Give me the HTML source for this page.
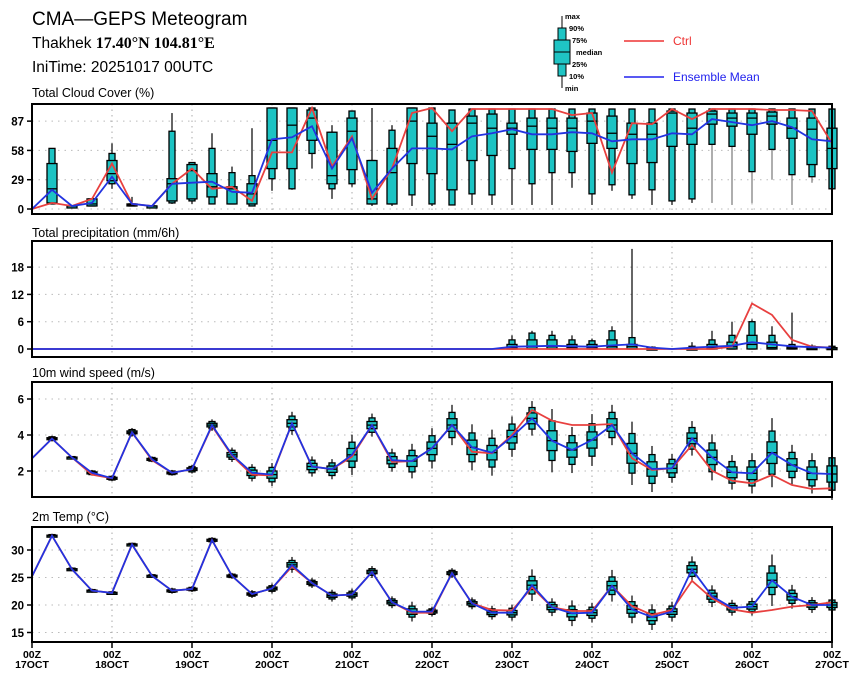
<!DOCTYPE html>
<html><head><meta charset="utf-8"><style>
html,body{margin:0;padding:0;background:#fff;width:860px;height:680px;overflow:hidden}
svg{display:block}
text{font-family:"Liberation Sans",sans-serif}
</style></head><body>
<svg id="s" width="860" height="680" xmlns="http://www.w3.org/2000/svg">
<text x="32" y="25" font-size="19">CMA—GEPS Meteogram</text>
<text x="32" y="48" font-size="15.5">Thakhek <tspan font-family="Liberation Serif" font-weight="bold" font-size="16">17.40°N 104.81°E</tspan></text>
<text x="32" y="72" font-size="15.5">IniTime: 20251017 00UTC</text>
<g id="leg">
<line x1="562" y1="16" x2="562" y2="88" stroke="#000" stroke-width="1"/>
<rect x="558" y="28" width="8" height="12" fill="#1fc4c4" stroke="#000" stroke-width="1"/>
<rect x="554" y="40" width="16" height="24" fill="#1fc4c4" stroke="#000" stroke-width="1"/>
<line x1="554" y1="52" x2="570" y2="52" stroke="#000"/>
<rect x="558" y="64" width="8" height="12" fill="#1fc4c4" stroke="#000" stroke-width="1"/>
<g font-size="7.5" font-weight="bold">
<text x="565" y="19">max</text><text x="569" y="31">90%</text><text x="572" y="43">75%</text>
<text x="576" y="55">median</text><text x="572" y="67">25%</text><text x="569" y="79">10%</text><text x="565" y="91">min</text>
</g>
<line x1="624" y1="41" x2="664" y2="41" stroke="#e33" stroke-width="1.5"/>
<text x="673" y="45" font-size="12" fill="#e33">Ctrl</text>
<line x1="624" y1="77" x2="664" y2="77" stroke="#22e" stroke-width="1.5"/>
<text x="673" y="81" font-size="12" fill="#22e">Ensemble Mean</text>
</g>
</svg>
<script>
var S=document.getElementById('s'),h='';
function X(i){return 32+20*i}
var panels=[
 {t:'Total Cloud Cover (%)',top:104,bot:214,y0:209,k:1.01,v0:0,ticks:[0,29,58,87],lt:97},
 {t:'Total precipitation (mm/6h)',top:241,bot:357,y0:349,k:4.55,v0:0,ticks:[0,6,12,18],lt:237},
 {t:'10m wind speed (m/s)',top:382,bot:497,y0:507,k:18,v0:0,ticks:[2,4,6],lt:377},
 {t:'2m Temp (°C)',top:527,bot:642,y0:605,k:5.5,v0:20,ticks:[15,20,25,30],lt:521}
];
var cloud=[[0,0,0,0,0,0,0,0,0],[5,5,6,20,45,60,60,6,19],[3,3,3,3,3,3,3,3,3],[3,3,3,5,10,10,10,10,6],[20,25,28,35,48,55,65,45,32],[3,3,3,4,5,5,12,5,5],[3,3,3,3,3,3,3,3,3],[5,6,8,25,30,77,95,25,25],[5,8,10,38,44,46,46,40,26],[5,5,12,22,35,60,75,20,27],[5,5,5,20,22,36,42,22,17],[3,3,5,15,25,33,80,8,16],[18,30,40,68,100,100,100,56,69],[19,20,40,83,100,100,100,56,71],[40,55,68,90,98,100,100,100,82],[10,20,25,33,76,76,83,42,40],[22,25,39,77,90,97,97,72,70],[3,5,5,10,48,48,100,10,16],[3,5,5,36,60,78,83,40,40],[3,14,45,87,100,100,100,95,60],
[3,5,35,72,85,100,100,100,60],[4,4,19,64,85,98,98,77,59],[4,15,48,85,92,99,99,99,72],[4,14,53,80,94,99,99,99,75],[4,40,74,80,85,99,99,99,79],[4,25,59,82,90,99,99,99,74],[4,36,59,80,90,99,99,99,74],[21,36,57,80,90,99,99,93,76],[4,15,65,87,95,99,99,95,75],[18,24,60,75,92,99,99,36,67],[10,14,45,74,85,99,99,85,69],[4,19,46,74,85,99,99,84,69],[4,8,62,95,97,99,99,99,75],[6,10,64,80,95,99,99,89,74],[6,64,84,94,97,99,99,99,89],[4,62,82,90,95,99,99,99,86],[6,37,74,90,95,99,99,99,83],[29,59,84,92,96,99,99,98,87],[4,34,70,80,90,99,99,98,81],[26,32,44,79,90,99,99,97,69],[15,20,40,60,80,99,99,65,67]];
var prec=[];for(var i=0;i<41;i++)prec.push([0,0,0,0,0,0,0,0,0]);
var pd={24:[0,0,0,0.3,1,2,3,0,0.5],25:[0,0,0,0.5,2,3.5,4,0,0.6],26:[0,0,0,0.5,2,3,4,0,0.7],27:[0,0,0,0.3,1,2,3,0,0.6],28:[0,0,0,0.3,1,1.8,2.3,0,0.5],29:[0,0,0,0.5,2,4,5,0,0.8],30:[0,0,0,0.5,1,2.5,22,0,1],31:[0,0,0,0,0.2,0.4,0.6,0,0.3],33:[0,0,0,0,0.2,0.6,1.5,0,0.3],34:[0,0,0,0.3,1,2,4,0,0.5],35:[0,0,0,0.5,1.5,3,6,0.5,0.7],36:[0,0,0,1,3,6,6.5,10,1.5],37:[0,0,0,0.3,1.5,3,5,7.5,1],38:[0,0,0,0.2,0.5,1,8,2,0.6],39:[0,0,0,0,0.3,0.6,1,0.5,0.4],40:[0,0,0,0,0.3,0.6,1.5,0.3,0.3]};
for(var k in pd)prec[k]=pd[k];
var wm=[2.7,3.8,2.75,1.9,1.6,4.15,2.65,1.9,2.1,4.55,2.9,1.9,1.8,4.65,2.25,2.1,2.9,4.55,2.6,2.55];
var wz=[[235,235],[165,165],[232,245],[248,250],[200,195],[145,120],[212,152],[240,165],[210,165],[165,162],[250,265],[297,300],[295,295],[205,225],[262,302],[307,332],[310,340],[248,315],[285,345],[310,357],[312,355]];
var wc=[2.7,3.8,2.75,1.8,1.6,4.15,2.6,1.9,2.1,4.5,2.85,1.8,1.75,4.65,2.25,2.1,2.8,4.55,2.5,2.55];
var ws=[0,.1,.05,.1,.1,.15,.1,.1,.15,.2,.25,.3,.4,.4,.35,.35,.7,.4,.4,.6, .7,.7,.8,.8,.7,.6,1.1,.8,.9,.7,1.1,.8,.5,.6,.8,.6,.7,1.2,.7,.7,.9];
var wind=[];
for(var i=0;i<41;i++){var m,c;if(i<20){m=wm[i];c=wc[i]}else{m=(507-(wz[i-20][0]/3+370))/18;c=(507-(wz[i-20][1]/3+370))/18}
var s=ws[i];wind.push([m-1.6*s,m-s,m-.5*s,m,m+.5*s,m+s,m+1.6*s,c,m]);}
var tm=[25.2,32.6,26.5,22.6,22.2,31.0,25.3,22.6,22.9,31.8,25.3,22.0,23.0,27.3,24.0,21.7,21.9,26.0,20.5,18.8,18.8,25.8,20.3,18.6,18.6,23.6,19.6,18.5,18.6,23.5,19.2,17.8,18.8,26.5,21.6,19.5,19.7,24.5,21.5,20.0,20.0];
var tc=tm.slice();tc[13]=27;tc[19]=18.6;tc[20]=18.6;tc[33]=24.4;tc[34]=21.2;tc[35]=19.2;tc[36]=18.6;tc[37]=19.1;tc[38]=19.7;tc[39]=20;tc[40]=20.5;tc[25]=23.2;tc[29]=23.5;tc[30]=19.8;tc[31]=18.2;tc[32]=19.1;tc[23]=19.1;tc[24]=19.0;tc[27]=18.9;tc[28]=18.9;
var tsd=[0,.2,.2,.2,.2,.2,.2,.3,.3,.3,.3,.4,.5,.8,.5,.6,.6,.6,.6,1,.5,.5,.6,.7,.8,1.6,.9,1.3,1,1.6,1.4,1.3,1,1.3,1.1,.8,.9,2.6,1.2,.8,.9];
var temp=[];for(var i=0;i<41;i++){var m=tm[i],s=tsd[i];temp.push([m-1.8*s,m-s,m-.5*s,m,m+.5*s,m+s,m+1.8*s,tc[i],m]);}
var data=[cloud,prec,wind,temp];
panels.forEach(function(p,pi){
 function Y(v){return p.y0-(v-p.v0)*p.k}
 h+='<text x="32" y="'+p.lt+'" font-size="12.5">'+p.t+'</text>';
 for(var d=1;d<10;d++){var x=X(d*4);h+='<line x1="'+x+'" y1="'+p.top+'" x2="'+x+'" y2="'+p.bot+'" stroke="#aaa" stroke-dasharray="1.5,4"/>';}
 p.ticks.forEach(function(t){var y=Y(t);h+='<line x1="32" y1="'+y+'" x2="832" y2="'+y+'" stroke="#bbb" stroke-dasharray="1.5,5"/>';
  h+='<line x1="27" y1="'+y+'" x2="32" y2="'+y+'" stroke="#000" stroke-width="1.5"/>';
  h+='<text x="24" y="'+(y+4.5)+'" font-size="11.5" font-weight="bold" text-anchor="end">'+t+'</text>';});
 var D=data[pi];
 D.forEach(function(b,i){var x=X(i);if(i==0)return;if(pi==1&&b[6]==0)return;
  var col=(pi==0&&i>=34)?'#777':'#000';
  h+='<line x1="'+x+'" y1="'+Y(b[0])+'" x2="'+x+'" y2="'+Y(b[6])+'" stroke="'+col+'" stroke-width="1.2"/>';
  var a=Y(b[5]),c=Y(b[1]);h+='<rect x="'+(x-3)+'" y="'+a+'" width="6" height="'+Math.max(1.5,c-a)+'" fill="#1cc3c3" stroke="#000" stroke-width="1.3"/>';
  a=Y(b[4]);c=Y(b[2]);h+='<rect x="'+(x-5)+'" y="'+a+'" width="10" height="'+Math.max(2,c-a)+'" fill="#1cc3c3" stroke="#000" stroke-width="1.3"/>';
  h+='<line x1="'+(x-5)+'" y1="'+Y(b[3])+'" x2="'+(x+5)+'" y2="'+Y(b[3])+'" stroke="#000" stroke-width="1.3"/>';
 });
 var pc='',pm='';D.forEach(function(b,i){pc+=(i?'L':'M')+X(i)+','+Y(b[7]).toFixed(1);pm+=(i?'L':'M')+X(i)+','+Y(b[8]).toFixed(1);});
 h+='<path d="'+pc+'" fill="none" stroke="#e8403f" stroke-width="1.8"/>';
 h+='<path d="'+pm+'" fill="none" stroke="#2233e0" stroke-width="1.8"/>';
 h+='<rect x="32" y="'+p.top+'" width="800" height="'+(p.bot-p.top)+'" fill="none" stroke="#000" stroke-width="2"/>';
});
var days=['17','18','19','20','21','22','23','24','25','26','27'];
days.forEach(function(d,j){var x=X(j*4);h+='<line x1="'+x+'" y1="642" x2="'+x+'" y2="648" stroke="#000" stroke-width="1.5"/>';
 h+='<text x="'+x+'" y="658" font-size="10.5" font-weight="bold" text-anchor="middle">00Z</text><text x="'+x+'" y="668" font-size="10.5" font-weight="bold" text-anchor="middle">'+d+'OCT</text>';});
S.insertAdjacentHTML('beforeend',h);
</script>
</body></html>
